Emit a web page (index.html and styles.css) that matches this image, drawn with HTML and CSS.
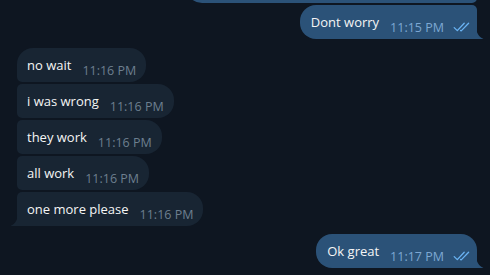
FILE: index.html
```html
<!DOCTYPE html>
<html>
<head>
<meta charset="utf-8">
<link rel="stylesheet" href="styles.css">
</head>
<body>
<div class="chat">
  <div class="group out">
    <div class="bubble out first ghost"></div>
    <div class="bubble out last">
      <span class="text">Dont worry</span>
      <span class="time">11:15 PM</span>
      <svg class="checks" width="17" height="10" viewBox="0 0 17 10"><path d="M1.2 5.6 L4.3 8.6 L11.2 1.2" /><path d="M7.6 8.4 L8.2 8.9 L15.6 1.2" /></svg>
      <svg class="tail tail-out" width="8" height="12" viewBox="0 0 8 12"><path d="M0 0 C0.5 6 2.5 9.5 7.5 12 L0 12 Z" /></svg>
    </div>
  </div>
  <div class="group in">
    <div class="bubble in first"><span class="text">no wait</span><span class="time">11:16 PM</span></div>
    <div class="bubble in mid"><span class="text">i was wrong</span><span class="time">11:16 PM</span></div>
    <div class="bubble in mid"><span class="text">they work</span><span class="time">11:16 PM</span></div>
    <div class="bubble in mid"><span class="text">all work</span><span class="time">11:16 PM</span></div>
    <div class="bubble in last"><span class="text">one more please</span><span class="time">11:16 PM</span>
      <svg class="tail tail-in" width="8" height="12" viewBox="0 0 8 12"><path d="M8 0 C7.5 6 5.5 9.5 0.5 12 L8 12 Z" /></svg>
    </div>
  </div>
  <div class="group out">
    <div class="bubble out last single">
      <span class="text">Ok great</span>
      <span class="time">11:17 PM</span>
      <svg class="checks" width="17" height="10" viewBox="0 0 17 10"><path d="M1.2 5.6 L4.3 8.6 L11.2 1.2" /><path d="M7.6 8.4 L8.2 8.9 L15.6 1.2" /></svg>
      <svg class="tail tail-out" width="8" height="12" viewBox="0 0 8 12"><path d="M0 0 C0.5 6 2.5 9.5 7.5 12 L0 12 Z" /></svg>
    </div>
  </div>
</div>
</body>
</html>
```
FILE: styles.css
```css
html, body {
  margin: 0;
  padding: 0;
  background: #0e1621;
  height: 100%;
  overflow: hidden;
}
.chat {
  display: flex;
  flex-direction: column;
  padding: 0 13px 0 17px;
  font-family: "Open Sans", "Noto Sans", sans-serif;
}
.group {
  display: flex;
  flex-direction: column;
  gap: 2px;
}
.group.out {
  align-items: flex-end;
}
.group.in {
  align-items: flex-start;
  margin-top: 9px;
}
.group.in + .group.out {
  margin-top: 8px;
}
.bubble {
  position: relative;
  display: flex;
  align-items: flex-end;
  height: 34px;
  box-sizing: border-box;
  padding: 8px 10px 0 10px;
  border-radius: 16px;
}
.bubble.in {
  background: #182533;
}
.bubble.out {
  background: #2b5278;
  padding-right: 7px;
  padding-left: 11px;
}
.ghost {
  width: 291px;
  margin-top: -31px;
}
.bubble.in.first { border-bottom-left-radius: 5px; }
.bubble.in.mid { border-top-left-radius: 5px; border-bottom-left-radius: 5px; }
.bubble.in.last { border-top-left-radius: 5px; border-bottom-left-radius: 0; }
.bubble.out.first { border-bottom-right-radius: 5px; }
.bubble.out.last { border-top-right-radius: 5px; border-bottom-right-radius: 0; }
.bubble.out.single { border-top-right-radius: 16px; }
.text {
  color: #f5f5f5;
  font-size: 13px;
  line-height: 18px;
  margin-bottom: 8px;
  white-space: nowrap;
}
.time {
  font-size: 12.5px;
  line-height: 14px;
  margin-bottom: 4px;
  margin-left: 11px;
  white-space: nowrap;
}
.bubble.in .time {
  color: #6d7f8f;
}
.bubble.out .time {
  color: #7da8d3;
}
.checks {
  margin-left: 9px;
  margin-bottom: 7px;
  fill: none;
  stroke: #6ab3f3;
  stroke-width: 1.3;
  stroke-linecap: round;
  stroke-linejoin: round;
}
.tail {
  position: absolute;
  bottom: 0;
}
.tail-out {
  right: -7px;
  fill: #2b5278;
}
.tail-in {
  left: -7px;
  fill: #182533;
}
```
